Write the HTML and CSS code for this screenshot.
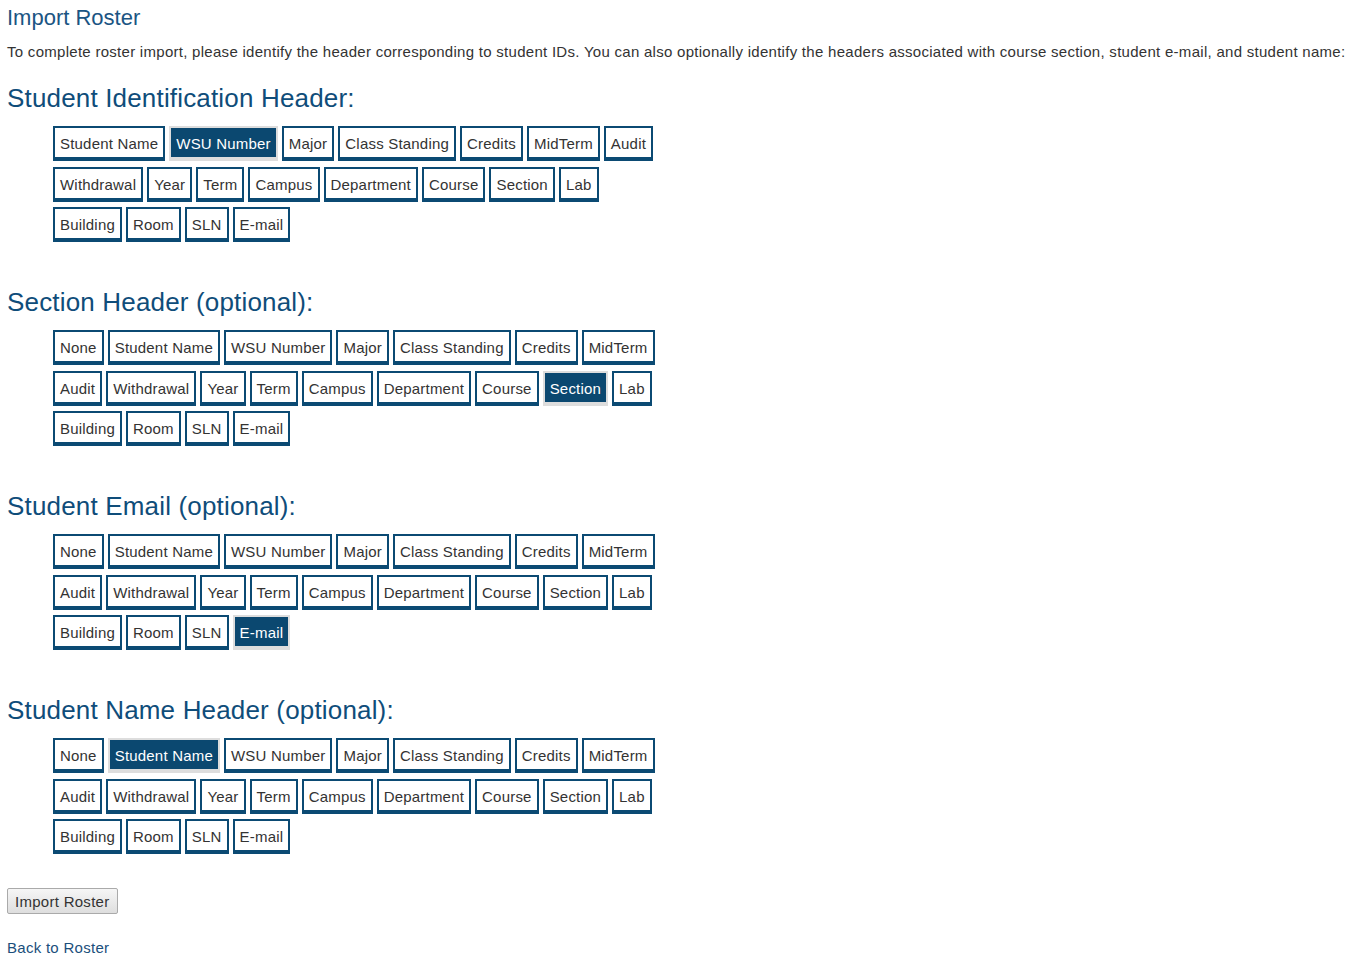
FILE: index.html
```html
<!DOCTYPE html>
<html>
<head>
<meta charset="utf-8">
<link rel="stylesheet" href="styles.css">
</head>
<body>
<h1 class="title">Import Roster</h1>
<p class="intro">To complete roster import, please identify the header corresponding to student IDs. You can also optionally identify the headers associated with course section, student e-mail, and student name:</p>

<h2 class="group-title">Student Identification Header:</h2>
<div class="choices">
  <div class="row"><span class="opt">Student Name</span><span class="opt sel">WSU Number</span><span class="opt">Major</span><span class="opt">Class Standing</span><span class="opt">Credits</span><span class="opt">MidTerm</span><span class="opt">Audit</span></div>
  <div class="row"><span class="opt">Withdrawal</span><span class="opt">Year</span><span class="opt">Term</span><span class="opt">Campus</span><span class="opt">Department</span><span class="opt">Course</span><span class="opt">Section</span><span class="opt">Lab</span></div>
  <div class="row"><span class="opt">Building</span><span class="opt">Room</span><span class="opt">SLN</span><span class="opt">E-mail</span></div>
</div>

<h2 class="group-title">Section Header (optional):</h2>
<div class="choices">
  <div class="row"><span class="opt">None</span><span class="opt">Student Name</span><span class="opt">WSU Number</span><span class="opt">Major</span><span class="opt">Class Standing</span><span class="opt">Credits</span><span class="opt">MidTerm</span></div>
  <div class="row"><span class="opt">Audit</span><span class="opt">Withdrawal</span><span class="opt">Year</span><span class="opt">Term</span><span class="opt">Campus</span><span class="opt">Department</span><span class="opt">Course</span><span class="opt sel">Section</span><span class="opt">Lab</span></div>
  <div class="row"><span class="opt">Building</span><span class="opt">Room</span><span class="opt">SLN</span><span class="opt">E-mail</span></div>
</div>

<h2 class="group-title">Student Email (optional):</h2>
<div class="choices">
  <div class="row"><span class="opt">None</span><span class="opt">Student Name</span><span class="opt">WSU Number</span><span class="opt">Major</span><span class="opt">Class Standing</span><span class="opt">Credits</span><span class="opt">MidTerm</span></div>
  <div class="row"><span class="opt">Audit</span><span class="opt">Withdrawal</span><span class="opt">Year</span><span class="opt">Term</span><span class="opt">Campus</span><span class="opt">Department</span><span class="opt">Course</span><span class="opt">Section</span><span class="opt">Lab</span></div>
  <div class="row"><span class="opt">Building</span><span class="opt">Room</span><span class="opt">SLN</span><span class="opt sel">E-mail</span></div>
</div>

<h2 class="group-title">Student Name Header (optional):</h2>
<div class="choices">
  <div class="row"><span class="opt">None</span><span class="opt sel">Student Name</span><span class="opt">WSU Number</span><span class="opt">Major</span><span class="opt">Class Standing</span><span class="opt">Credits</span><span class="opt">MidTerm</span></div>
  <div class="row"><span class="opt">Audit</span><span class="opt">Withdrawal</span><span class="opt">Year</span><span class="opt">Term</span><span class="opt">Campus</span><span class="opt">Department</span><span class="opt">Course</span><span class="opt">Section</span><span class="opt">Lab</span></div>
  <div class="row"><span class="opt">Building</span><span class="opt">Room</span><span class="opt">SLN</span><span class="opt">E-mail</span></div>
</div>

<div class="actions">
  <button class="submit" type="button">Import Roster</button>
</div>
<div class="links">
  <a class="back" href="#">Back to Roster</a>
</div>
</body>
</html>
```

FILE: styles.css
```css
body {
  margin: 0;
  padding: 0 7px;
  font-family: "Liberation Sans", Arial, sans-serif;
  font-size: 15px;
  letter-spacing: 0.28px;
  color: #333;
  background: #fff;
}
.title {
  margin: 4px 0 0;
  font-size: 22px;
  font-weight: normal;
  letter-spacing: 0;
  color: #1b5583;
  line-height: 28px;
}
.intro {
  margin: 10px 0 0;
  line-height: 20px;
  color: #333;
}
.group-title {
  margin: 20px 0 0;
  font-size: 26px;
  font-weight: normal;
  letter-spacing: 0.17px;
  color: #0f4d7a;
  line-height: 32px;
}
.choices {
  margin: 12px 0 0 46px;
  display: flex;
  flex-direction: column;
  gap: 5.5px;
}
.row {
  display: flex;
  gap: 4px;
}
.opt {
  box-sizing: border-box;
  height: 35px;
  padding: 6px 5px 0;
  border: 2px solid #0b4a73;
  border-bottom-width: 4px;
  background: #fff;
  color: #333;
  line-height: 20px;
  font-size: 15px;
  letter-spacing: 0.2px;
  white-space: nowrap;
}
.opt.sel {
  background: #0b4870;
  color: #fff;
  border-color: #ddd;
}
.choices + .group-title {
  margin-top: 44px;
}
.actions {
  margin-top: 34px;
}
.submit {
  display: block;
  height: 26px;
  font-family: "Liberation Sans", Arial, sans-serif;
  font-size: 15px;
  letter-spacing: 0.28px;
  color: #333;
  padding: 0 7px;
  border: 1px solid #aaa;
  border-radius: 2px;
  background: linear-gradient(#f6f6f6, #dedede);
}
.links {
  margin-top: 25px;
}
.back {
  color: #1b4f7c;
  text-decoration: none;
}
```
